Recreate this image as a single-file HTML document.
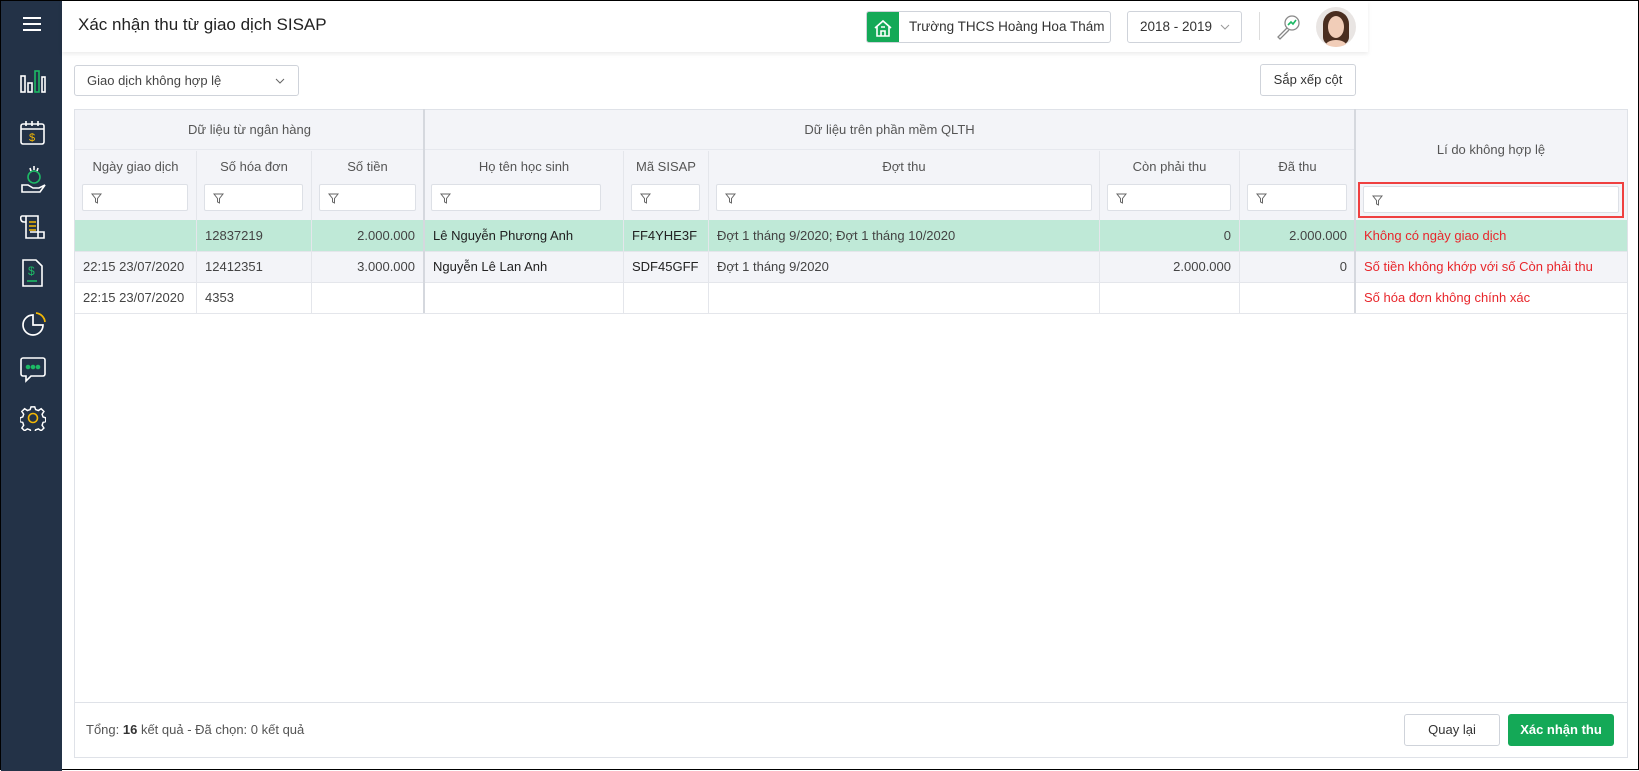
<!DOCTYPE html>
<html><head><meta charset="utf-8"><style>
*{box-sizing:border-box;margin:0;padding:0}
body{width:1639px;height:770px;background:#fff;font-family:"Liberation Sans",sans-serif;font-size:13px;color:#444;position:relative;overflow:hidden;border:1.5px solid #000}
.a{position:absolute}
#side{left:0;top:0;width:61px;height:770px;background:#233247}
#hdr{left:61px;top:0;width:1306px;height:51px;background:#fff;box-shadow:0 2px 4px rgba(0,0,0,.08)}
.box{border:1px solid #cfd3da;border-radius:3px;background:#fff}
.th{background:#f3f4f8;color:#555;text-align:center}
.flt{background:#fff;border:1px solid #dde0e6;border-radius:2px;height:27px}
.flt svg{position:absolute;left:8px;top:8px}
.cell{position:absolute;height:31px;line-height:31px;white-space:nowrap;padding:0 8px}
.vl{position:absolute;width:1px;background:#e4e6eb}
.hl{position:absolute;height:1px;background:#e4e6eb}
.red{color:#e8262b}
</style></head><body>
<div class="a" id="side">
<div class="a" style="left:22px;top:16px;width:18px;height:2px;background:#fff;box-shadow:0 6px 0 #fff,0 12px 0 #fff"></div>
<svg class="a" style="left:19px;top:68px" width="26" height="26" fill="none" stroke="#fff" stroke-width="1.6"><rect x="1" y="7" width="4" height="16"/><rect x="8" y="14" width="4" height="9"/><rect x="15" y="2" width="4" height="21" stroke="#1db965"/><rect x="22" y="8" width="3" height="15"/></svg>
<svg class="a" style="left:19px;top:119px" width="26" height="26" fill="none" stroke="#fff" stroke-width="1.6"><rect x="1" y="4" width="23" height="20" rx="2"/><path d="M1 9h23M6 1v5M12 1v5M18 1v5"/><text x="9" y="21" font-size="11" fill="#f2b705" stroke="none" font-family="Liberation Sans">$</text></svg>
<svg class="a" style="left:19px;top:164px" width="26" height="30" fill="none" stroke="#fff" stroke-width="1.6"><circle cx="14" cy="12" r="6" stroke="#1db965"/><path d="M14 1v4M10 3l1 3M18 3l-1 3"/><path d="M2 20h6l5 3h6l6-3-5 7H2z"/></svg>
<svg class="a" style="left:19px;top:213px" width="26" height="28" fill="none" stroke="#fff" stroke-width="1.6"><path d="M2 2h16v22M2 2c-2 0-2 6 2 6h2M6 2v22h18v-6H10"/><path d="M9 8h7M9 12h7M9 16h7" stroke="#f2b705"/></svg>
<svg class="a" style="left:21px;top:258px" width="22" height="28" fill="none" stroke="#fff" stroke-width="1.6"><path d="M1 1h13l6 6v20H1z"/><path d="M5 22h10" stroke="#1db965"/><text x="6" y="16" font-size="12" fill="#1db965" stroke="none" font-family="Liberation Sans">$</text></svg>
<svg class="a" style="left:20px;top:311px" width="26" height="26" fill="none" stroke="#fff" stroke-width="1.7"><path d="M12 3a10 10 0 1 0 10 10H12z"/><path d="M15 1a10 10 0 0 1 9 9" stroke="#f2b705"/></svg>
<svg class="a" style="left:19px;top:356px" width="26" height="28" fill="none" stroke="#fff" stroke-width="1.6"><path d="M3 1h20a2 2 0 0 1 2 2v14a2 2 0 0 1-2 2H11l-5 5v-5H3a2 2 0 0 1-2-2V3a2 2 0 0 1 2-2z"/><circle cx="8" cy="10" r="1.5" fill="#1db965" stroke="#1db965"/><circle cx="13" cy="10" r="1.5" fill="#1db965" stroke="#1db965"/><circle cx="18" cy="10" r="1.5" fill="#1db965" stroke="#1db965"/></svg>
<svg class="a" style="left:19px;top:404px" width="26" height="26" fill="none" stroke="#fff" stroke-width="1.6"><path d="M11 1h4l1 3 3 1 3-2 3 3-2 3 1 3 3 1v4l-3 1-1 3 2 3-3 3-3-2-3 1-1 3h-4l-1-3-3-1-3 2-3-3 2-3-1-3-3-1v-4l3-1 1-3-2-3 3-3 3 2 3-1z" transform="scale(.92) translate(1 1)"/><circle cx="13" cy="13" r="4.5" stroke="#f2b705"/></svg>
</div>
<div class="a" id="hdr">
<div class="a" style="left:16px;top:14px;font-size:17px;color:#222">Xác nhận thu từ giao dịch SISAP</div>
<div class="a box" style="left:804px;top:10px;width:245px;height:32px;overflow:hidden">
<div class="a" style="left:0;top:0;width:32px;height:32px;background:#14a957"></div>
<svg class="a" style="left:7px;top:7px" width="18" height="18" fill="none" stroke="#fff" stroke-width="1.6"><path d="M1 9L9 2l8 7M3 7v10h12V7M7 17v-5h4v5M7 8h4"/></svg>
<div class="a" style="left:42px;top:7px;font-size:13.5px;color:#333">Trường THCS Hoàng Hoa Thám</div></div>
<div class="a box" style="left:1065px;top:10px;width:115px;height:32px"><div class="a" style="left:12px;top:7px;font-size:13.5px;color:#333">2018 - 2019</div>
<svg class="a" style="left:92px;top:12px" width="10" height="7" fill="none" stroke="#999"><path d="M1 1l4 4 4-4"/></svg></div>
<div class="a" style="left:1197px;top:11px;width:1px;height:28px;background:#ddd"></div>
<svg class="a" style="left:1214px;top:13px" width="26" height="26" fill="none" stroke="#888" stroke-width="1.3"><circle cx="16" cy="9" r="7"/><path d="M11 14l-9 9 2 2 9-9"/><path d="M12 11l3-3 2 2 3-4" stroke="#1db965" stroke-width="1.6"/></svg>
<div class="a" style="left:1254px;top:6px;width:40px;height:40px;border-radius:50%;overflow:hidden;background:#e9e5e3">
<div class="a" style="left:7px;top:4px;width:26px;height:34px;border-radius:13px 13px 8px 8px;background:#4a2e20"></div>
<div class="a" style="left:12px;top:9px;width:16px;height:22px;border-radius:50%;background:#f1cdb8"></div>
<div class="a" style="left:10px;top:33px;width:20px;height:10px;border-radius:50% 50% 0 0;background:#f1cdb8"></div></div>
</div>
<div class="a box" style="left:73px;top:64px;width:225px;height:31px"><div class="a" style="left:12px;top:7px;color:#444;font-size:13px">Giao dịch không hợp lệ</div>
<svg class="a" style="left:200px;top:12px" width="10" height="7" fill="none" stroke="#666"><path d="M1 1l4 4 4-4"/></svg></div>
<div class="a box" style="left:1259px;top:63px;width:96px;height:32px;text-align:center;line-height:30px;color:#333">Sắp xếp cột</div>

<div class="a" style="left:73px;top:108px;width:1554px;height:649px;border:1px solid #dfe2e8"></div>
<div class="a th" style="left:74px;top:109px;width:1552px;height:110px"></div>
<div class="a" style="left:74px;top:109px;width:349px;line-height:40px;text-align:center;color:#555">Dữ liệu từ ngân hàng</div>
<div class="a" style="left:423px;top:109px;width:931px;line-height:40px;text-align:center;color:#555">Dữ liệu trên phần mềm QLTH</div>
<div class="a" style="left:1354px;top:109px;width:272px;line-height:80px;text-align:center;color:#555">Lí do không hợp lệ</div>
<div class="hl" style="left:74px;top:148px;width:1280px;background:#e6e8ee"></div>
<div class="a" style="left:74px;top:219px;width:1552px;height:32px;background:#bfe9d7"></div>
<div class="a" style="left:74px;top:251px;width:1552px;height:31px;background:#f3f4f8"></div>
<div class="hl" style="left:74px;top:250px;width:1552px"></div>
<div class="hl" style="left:74px;top:281px;width:1552px"></div>
<div class="hl" style="left:74px;top:312px;width:1552px"></div>
<div class="a" style="left:422px;top:108px;width:2px;height:204px;background:#d5d8de"></div>
<div class="a" style="left:1353px;top:108px;width:2px;height:204px;background:#d5d8de"></div>
<div class="vl" style="left:195px;top:150px;height:162px"></div>
<div class="vl" style="left:310px;top:150px;height:162px"></div>
<div class="vl" style="left:622px;top:150px;height:162px"></div>
<div class="vl" style="left:707px;top:150px;height:162px"></div>
<div class="vl" style="left:1098px;top:150px;height:162px"></div>
<div class="vl" style="left:1238px;top:150px;height:162px"></div>

<div class="a" style="left:74px;top:158px;width:121px;text-align:center;color:#555">Ngày giao dịch</div>
<div class="a" style="left:196px;top:158px;width:114px;text-align:center;color:#555">Số hóa đơn</div>
<div class="a" style="left:311px;top:158px;width:111px;text-align:center;color:#555">Số tiền</div>
<div class="a" style="left:424px;top:158px;width:198px;text-align:center;color:#555">Họ tên học sinh</div>
<div class="a" style="left:623px;top:158px;width:84px;text-align:center;color:#555">Mã SISAP</div>
<div class="a" style="left:708px;top:158px;width:390px;text-align:center;color:#555">Đợt thu</div>
<div class="a" style="left:1099px;top:158px;width:139px;text-align:center;color:#555">Còn phải thu</div>
<div class="a" style="left:1239px;top:158px;width:115px;text-align:center;color:#555">Đã thu</div>

<div class="a flt" style="left:81px;top:183px;width:106px"><svg width="11" height="11" fill="none" stroke="#666"><path d="M1 1h9L6.5 5.5V10L4.5 9V5.5z"/></svg></div>
<div class="a flt" style="left:203px;top:183px;width:99px"><svg width="11" height="11" fill="none" stroke="#666"><path d="M1 1h9L6.5 5.5V10L4.5 9V5.5z"/></svg></div>
<div class="a flt" style="left:318px;top:183px;width:97px"><svg width="11" height="11" fill="none" stroke="#666"><path d="M1 1h9L6.5 5.5V10L4.5 9V5.5z"/></svg></div>
<div class="a flt" style="left:430px;top:183px;width:170px"><svg width="11" height="11" fill="none" stroke="#666"><path d="M1 1h9L6.5 5.5V10L4.5 9V5.5z"/></svg></div>
<div class="a flt" style="left:630px;top:183px;width:69px"><svg width="11" height="11" fill="none" stroke="#666"><path d="M1 1h9L6.5 5.5V10L4.5 9V5.5z"/></svg></div>
<div class="a flt" style="left:715px;top:183px;width:376px"><svg width="11" height="11" fill="none" stroke="#666"><path d="M1 1h9L6.5 5.5V10L4.5 9V5.5z"/></svg></div>
<div class="a flt" style="left:1106px;top:183px;width:124px"><svg width="11" height="11" fill="none" stroke="#666"><path d="M1 1h9L6.5 5.5V10L4.5 9V5.5z"/></svg></div>
<div class="a flt" style="left:1246px;top:183px;width:100px"><svg width="11" height="11" fill="none" stroke="#666"><path d="M1 1h9L6.5 5.5V10L4.5 9V5.5z"/></svg></div>
<div class="a" style="left:1357px;top:181px;width:266px;height:36px;border:2px solid #ef4040"></div>
<div class="a flt" style="left:1362px;top:185px;width:256px"><svg width="11" height="11" fill="none" stroke="#666"><path d="M1 1h9L6.5 5.5V10L4.5 9V5.5z"/></svg></div>

<div class="cell" style="left:196px;top:219px">12837219</div>
<div class="cell" style="left:311px;top:219px;width:111px;text-align:right">2.000.000</div>
<div class="cell" style="left:424px;top:219px;color:#222">Lê Nguyễn Phương Anh</div>
<div class="cell" style="left:623px;top:219px;color:#222">FF4YHE3F</div>
<div class="cell" style="left:708px;top:219px">Đợt 1 tháng 9/2020; Đợt 1 tháng 10/2020</div>
<div class="cell" style="left:1099px;top:219px;width:139px;text-align:right">0</div>
<div class="cell" style="left:1239px;top:219px;width:115px;text-align:right">2.000.000</div>
<div class="cell red" style="left:1355px;top:219px">Không có ngày giao dịch</div>

<div class="cell" style="left:74px;top:250px">22:15 23/07/2020</div>
<div class="cell" style="left:196px;top:250px">12412351</div>
<div class="cell" style="left:311px;top:250px;width:111px;text-align:right">3.000.000</div>
<div class="cell" style="left:424px;top:250px;color:#222">Nguyễn Lê Lan Anh</div>
<div class="cell" style="left:623px;top:250px;color:#222">SDF45GFF</div>
<div class="cell" style="left:708px;top:250px">Đợt 1 tháng 9/2020</div>
<div class="cell" style="left:1099px;top:250px;width:139px;text-align:right">2.000.000</div>
<div class="cell" style="left:1239px;top:250px;width:115px;text-align:right">0</div>
<div class="cell red" style="left:1355px;top:250px">Số tiền không khớp với số Còn phải thu</div>

<div class="cell" style="left:74px;top:281px">22:15 23/07/2020</div>
<div class="cell" style="left:196px;top:281px">4353</div>
<div class="cell red" style="left:1355px;top:281px">Số hóa đơn không chính xác</div>

<div class="hl" style="left:74px;top:701px;width:1552px;background:#dfe2e8"></div>
<div class="a" style="left:85px;top:721px;color:#555">Tổng: <b style="color:#333">16</b> kết quả - Đã chọn: 0 kết quả</div>
<div class="a box" style="left:1403px;top:713px;width:96px;height:32px;text-align:center;line-height:30px;color:#333">Quay lại</div>
<div class="a" style="left:1507px;top:713px;width:106px;height:32px;background:#14a957;border-radius:3px;text-align:center;line-height:32px;color:#fff;font-weight:bold">Xác nhận thu</div>
</body></html>
